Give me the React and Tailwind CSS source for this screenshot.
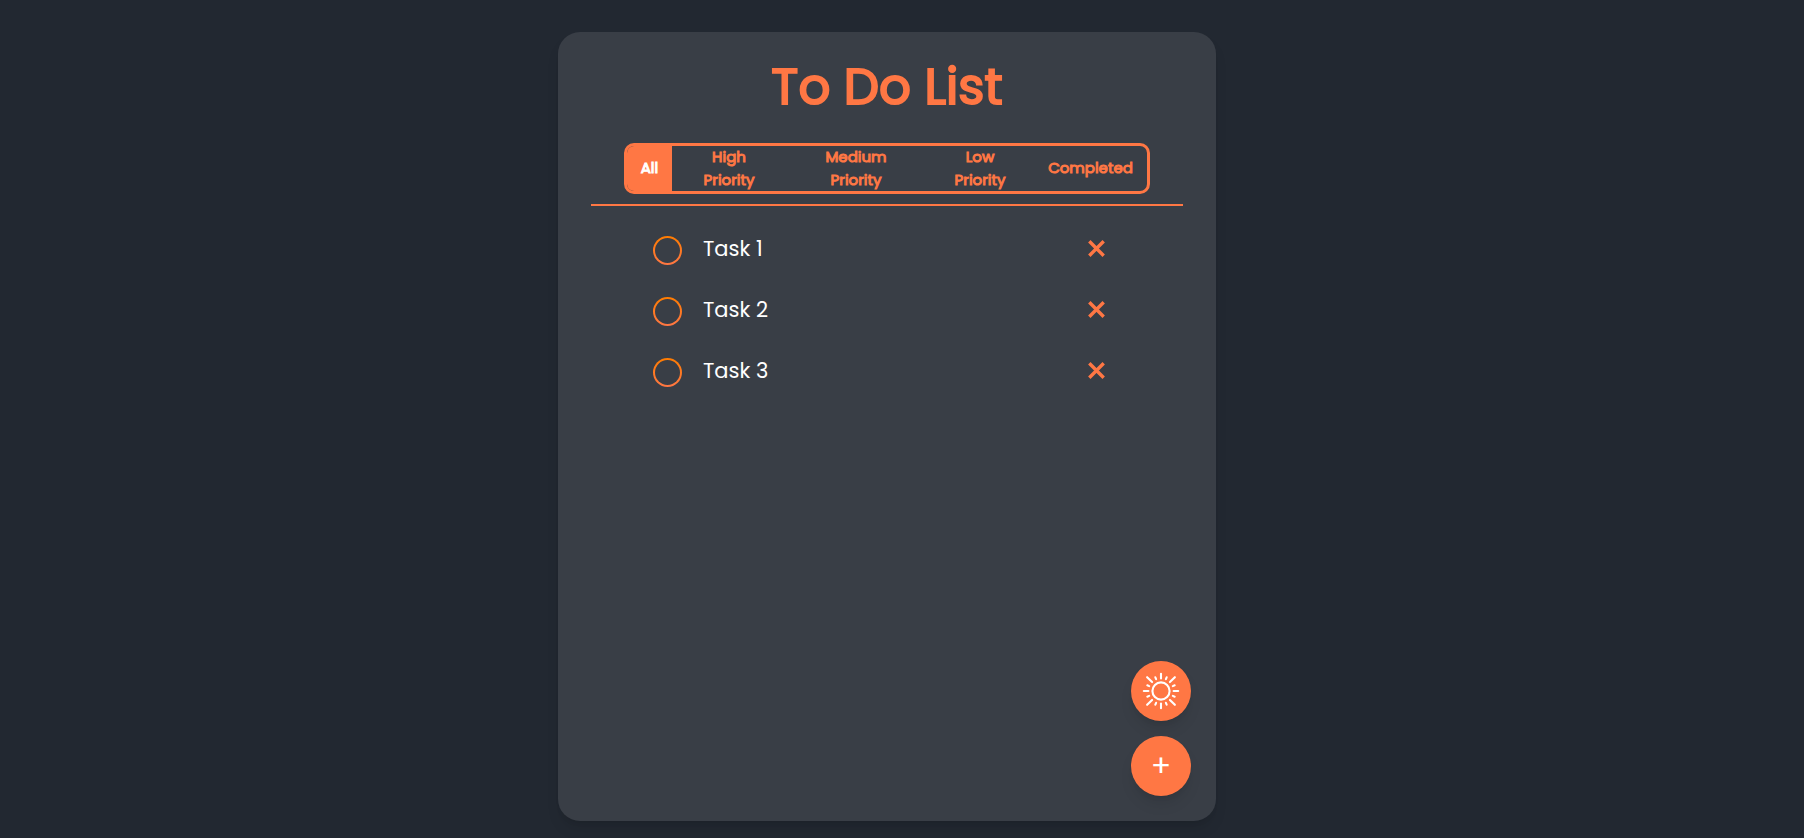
import { useState } from "react";

const FILTERS = ["All", "High Priority", "Medium Priority", "Low Priority", "Completed"];
const TASKS = ["Task 1", "Task 2", "Task 3"];

function SunIcon() {
  const angles = [0, 45, 90, 135, 180, 225, 270, 315];
  return (
    <svg viewBox="-22 -22 44 44" className="size-11" fill="none" stroke="currentColor" strokeWidth="2.1" strokeLinecap="round" aria-hidden="true">
      <circle r="8.6" strokeWidth="2.1" />
      {angles.map((a) => (
        <g key={a} transform={`rotate(${a})`}>
          <line y1="-12.6" y2={a % 90 ? -19.6 : -17.2} />
          <line y1="-12.8" y2="-14.8" transform="rotate(22.5)" />
        </g>
      ))}
    </svg>
  );
}

function CloseIcon() {
  return (
    <svg viewBox="0 0 17 17" className="size-[17px]" stroke="currentColor" strokeWidth="3.4" aria-hidden="true">
      <path d="M1.3 1.3 L15.7 15.7 M15.7 1.3 L1.3 15.7" />
    </svg>
  );
}

function TaskRow({ label }) {
  return (
    <li className="flex items-start">
      <label className="flex flex-1 items-start gap-[21px] text-[21px] leading-[25px] text-white">
        <input
          type="checkbox"
          className="size-[29px] appearance-none rounded-full border-2 border-transparent [background:linear-gradient(#393e46,#393e46)_padding-box,linear-gradient(#ff7c00,#ff7744)_border-box] checked:[background:#ff7744]"
        />
        {label}
      </label>
      <button type="button" aria-label={`Delete ${label}`} className="py-1 text-[#ff7744]">
        <CloseIcon />
      </button>
    </li>
  );
}

export default function App() {
  const [active, setActive] = useState("All");
  return (
    <main className="flex min-h-screen justify-center bg-[#222831] pt-8 pr-[30px] pb-[17px] font-[Poppins,Lato,sans-serif]">
      <section className="relative flex w-[658px] max-w-full flex-col rounded-[22px] bg-[#393e46] px-[33px] pt-6 shadow-lg">
        <h1 className="text-center text-[50px] leading-[61px] font-normal text-[#ff7744] [-webkit-text-stroke:2px_#ff7744]">To Do List</h1>
        <nav className="mx-[33px] mt-[26px] grid h-[51px] grid-cols-[45fr_114fr_140fr_108fr_113fr] overflow-hidden rounded-[10px] border-3 border-[#ff7744] text-[15px] leading-[23px]">
          {FILTERS.map((name) => (
            <button
              key={name}
              type="button"
              aria-pressed={active === name}
              onClick={() => setActive(name)}
              className={
                active === name
                  ? "bg-[#ff7744] pb-0.5 text-white [-webkit-text-stroke:1px_white]"
                  : "-mt-0.5 px-6 text-[#ff7744] [-webkit-text-stroke:1px_#ff7744] last:px-0"
              }
            >
              {name}
            </button>
          ))}
        </nav>
        <hr className="mt-[10px] border-t-2 border-[#ff7744]" />
        <ul className="mt-[30px] flex flex-col gap-8 pr-[78px] pl-[62px]">
          {TASKS.map((task) => (
            <TaskRow key={task} label={task} />
          ))}
        </ul>
        <div className="absolute right-[25px] bottom-[25px] flex flex-col gap-[15px] text-white">
          <button type="button" aria-label="Toggle theme" className="flex size-15 items-center justify-center rounded-full bg-[#ff7744] shadow-lg">
            <SunIcon />
          </button>
          <button type="button" aria-label="Add task" className="flex size-15 items-center justify-center rounded-full bg-[#ff7744] text-[30px] leading-[30px] shadow-lg">
            +
          </button>
        </div>
      </section>
    </main>
  );
}
